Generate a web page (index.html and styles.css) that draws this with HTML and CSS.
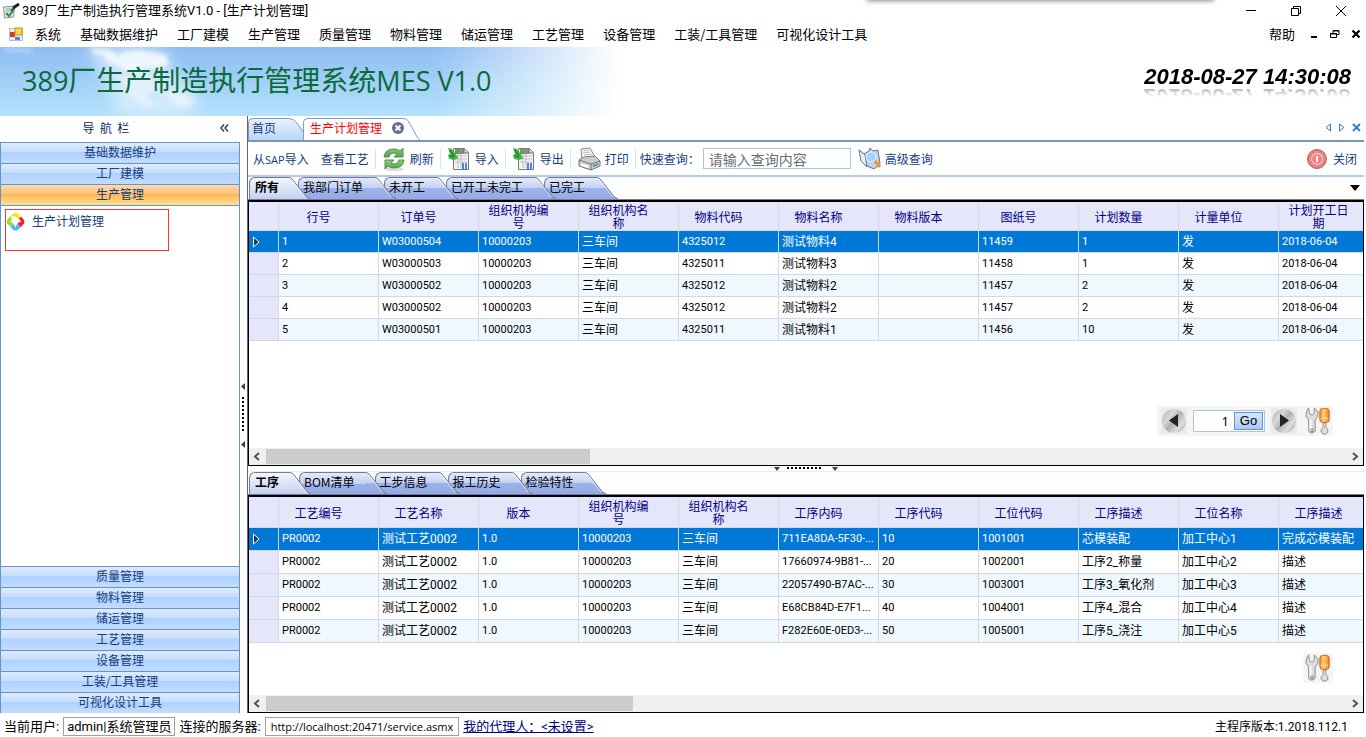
FILE: index.html
```html
<!DOCTYPE html>
<html lang="zh-CN">
<head>
<meta charset="utf-8">
<title>389厂生产制造执行管理系统V1.0</title>
<link rel="stylesheet" href="styles.css">
</head>
<body>
<svg class="defs" width="0" height="0" aria-hidden="true">
  <defs>
    <linearGradient id="gTab" x1="0" y1="0" x2="0" y2="1"><stop offset="0" stop-color="#e3eafa"/><stop offset=".5" stop-color="#c3d0f2"/><stop offset=".5" stop-color="#9bb2ea"/><stop offset="1" stop-color="#94abe6"/></linearGradient>
    <linearGradient id="gTabOn" x1="0" y1="0" x2="0" y2="1"><stop offset="0" stop-color="#f4f6fc"/><stop offset="1" stop-color="#c3d1f1"/></linearGradient>
    <linearGradient id="gHome" x1="0" y1="0" x2="0" y2="1"><stop offset="0" stop-color="#e9f1fc"/><stop offset="1" stop-color="#b9d5f9"/></linearGradient>
    <linearGradient id="gMetal" x1="0" y1=".1" x2="1" y2=".9"><stop offset="0" stop-color="#b4b4b4"/><stop offset=".3" stop-color="#d8d8d8"/><stop offset=".5" stop-color="#b0b0b0"/><stop offset=".75" stop-color="#dedede"/><stop offset="1" stop-color="#a4a4a4"/></linearGradient>
    <linearGradient id="gOrange" x1="0" y1="0" x2="1" y2="0"><stop offset="0" stop-color="#f78c20"/><stop offset=".4" stop-color="#ffd070"/><stop offset="1" stop-color="#f58018"/></linearGradient>
    <linearGradient id="gGreen" x1="0" y1="0" x2="0" y2="1"><stop offset="0" stop-color="#8fd070"/><stop offset="1" stop-color="#4fa648"/></linearGradient>
    <symbol id="slope" viewBox="0 0 21 22"><path d="M0 .5Q2 .5 4 3L17 19.500Q19 21.500 21 22H0z"/><path d="M0 1.500Q1.500 1.500 3 3.500L16 20" fill="none" stroke="#fff" opacity=".7"/><path d="M0 .5Q2 .5 4 3L17 19.500Q19 21.500 21 21.500" fill="none" stroke="#77789a"/></symbol>
    <symbol id="sheet" viewBox="0 0 24 24"><path d="M6.500 1.500h11l4 4v17h-15z" fill="#f4f4f4" stroke="#777"/><path d="M8 2h9v5H8z" fill="#8c8c8c"/><path d="M17 2v4h4" fill="#ddd" stroke="#666"/><path d="M8 9h12M8 12h12M8 15h12M11 7v14M14 7v14" stroke="#b4b4b4" stroke-width=".8"/><path d="M15 16h2v6h-2zM18 16h2v6h-2z" fill="#4d86e0"/><path d="M1 1l4 1 2 4 3-4 2 2-3 4 2 3-4 2-5-1-1-4 2-1z" fill="#3fb43f"/><path d="M3 3l4 6M3 9l4 1" stroke="#0d6d1d"/></symbol>
    <symbol id="tools" viewBox="0 0 30 30"><path d="M3 4l2-3 1 6 3 2 2-3V1l4 4v5l-3 4v12q-4 4-7 0V14L2 10z" fill="#ddd" stroke="#888"/><path d="M7 13v12" stroke="#fff" stroke-width="2"/><circle cx="8.500" cy="25" r="1.500" fill="#fff" stroke="#666"/><path d="M20.500 17h3v5l2 2v3l-2 2h-3l-2-2v-3l2-2z" fill="#ddd" stroke="#888"/><rect x="17" y="1.500" width="10" height="15" rx="3" fill="url(#gOrange)" stroke="#cf5d20"/><path d="M18 12h8" stroke="#ffe8b0"/></symbol>
    <symbol id="knob" viewBox="0 0 26 26"><rect width="26" height="26" fill="#ebebeb"/><circle cx="13" cy="13" r="12" fill="url(#gMetal)"/></symbol>
  </defs>
</svg>

<header class="titlebar">
  <svg class="appicon" viewBox="0 0 18 18"><path d="M1.500 5l11-1-1 11-9 1z" fill="#dfe6ea" stroke="#8a959b"/><path d="M4 7h6M4 9h4" stroke="#9aa"/><path d="M4 11l3 3 5-7" fill="none" stroke="#3b8a35" stroke-width="2"/><path d="M9 9l4-4" stroke="#555" stroke-width="2"/><path d="M11 6l6-4" stroke="#222" stroke-width="3"/></svg>
  <h1>389厂生产制造执行管理系统V1.0 - [生产计划管理]</h1>
  <i class="shadow-strip"></i>
  <div class="winbtns">
    <button aria-label="最小化"><svg width="12" height="12"><path d="M1 5.500h10" stroke="#000"/></svg></button>
    <button aria-label="还原"><svg width="12" height="12"><path d="M1.500 3.500h7v7h-7zM3.500 3V1.500h7v7H9" fill="none" stroke="#000"/></svg></button>
    <button aria-label="关闭窗口"><svg width="12" height="12"><path d="M1 1l10 10M11 1L1 11" stroke="#000"/></svg></button>
  </div>
</header>

<nav class="menubar">
  <svg class="formicon" viewBox="0 0 14 14"><rect x=".5" y="1.500" width="13" height="12" fill="#eee" stroke="#bbb"/><rect x="1" y="5" width="5" height="5" fill="#d33a26"/><rect x="6" y="1" width="7" height="7" fill="#ffd34d" stroke="#c99612"/><rect x="6" y="10" width="5" height="3" fill="#4d86e8"/></svg>
  <button>系统</button><button>基础数据维护</button><button>工厂建模</button><button>生产管理</button><button>质量管理</button><button>物料管理</button><button>储运管理</button><button>工艺管理</button><button>设备管理</button><button>工装/工具管理</button><button>可视化设计工具</button>
  <button class="help">帮助</button>
  <div class="mdibtns">
    <button aria-label="最小化子窗口"><svg width="10" height="10"><path d="M2 8h6" stroke="#000" stroke-width="2"/></svg></button>
    <button aria-label="还原子窗口"><svg width="10" height="10"><path d="M.5 4.500h6v4h-6zM3 4V1.500h6v4H7M3 2h6M0 5h7" fill="none" stroke="#000"/></svg></button>
    <button aria-label="关闭子窗口"><svg width="10" height="10"><path d="M1.500 1.500l7 7M8.500 1.500l-7 7" stroke="#000" stroke-width="2.200"/></svg></button>
  </div>
</nav>

<section class="banner">
  <svg class="sky" viewBox="0 0 620 69" width="620" height="69" aria-hidden="true">
    <defs>
      <linearGradient id="sky" x1="0" y1="0" x2="0" y2="1"><stop offset="0" stop-color="#8fbdf2"/><stop offset="1" stop-color="#b4e2fc"/></linearGradient>
      <linearGradient id="fade" x1="0" x2="1" y1="0" y2="0"><stop offset=".7" stop-color="#fff" stop-opacity="0"/><stop offset="1" stop-color="#fff"/></linearGradient>
      <filter id="soft" x="-20%" y="-40%" width="140%" height="180%"><feGaussianBlur stdDeviation="2"/></filter>
      <filter id="softer" x="-20%" y="-40%" width="140%" height="180%"><feGaussianBlur stdDeviation="7"/></filter>
    </defs>
    <rect width="620" height="69" fill="url(#sky)"/>
    <path d="M86 0h70l14 8 0 14 16 14 14 20-10 13H120l-18-40z" fill="#e5f3fd" opacity=".65" filter="url(#softer)"/>
    <g fill="#fff" filter="url(#soft)" opacity=".7"><path d="M90 1l20 2 8 6 8-5 14-1 14 3 12 2 3 8-8 6-14-2-8 7-14-3-8-6-9-3-4-6-12-3z"/><path d="M118 27l16 4 10-5 10 6 6 8-8 3-6 8 10 8-10 1-16-10-8-14z" opacity=".55"/><path d="M0 2h32v3H8zM166 46l14-2 16 10-10 7-14-4z" opacity=".6"/></g>
    <rect width="620" height="69" fill="url(#fade)"/>
  </svg>
  <div class="brand"><b>389</b>厂生产制造执行管理系统<b>MES V1.0</b></div>
  <time class="clock" datetime="2018-08-27T14:30:08">2018-08-27 14:30:08</time>
</section>

<main class="work">
  <aside class="side">
    <div class="side-head"><span>导&nbsp;&nbsp;航&nbsp;&nbsp;栏</span><button aria-label="折叠"><svg width="9" height="8"><path d="M4 .5L1 4l3 3.500M8 .5L5 4l3 3.500" fill="none" stroke="#153d7e" stroke-width="1.400"/></svg></button></div>
    <div class="groups">
      <button>基础数据维护</button><button>工厂建模</button><button class="on">生产管理</button>
      <div class="group-body"><a class="entry" href="#plan"><svg viewBox="0 0 18 18"><path d="M3.500 4.500L7 1.500Q9 0 11 1.500L14.500 4.500 9 9z" fill="#ffe11e"/><path d="M14.500 4.500L17 7.500Q18 9 17 11L14 14.500 9 9z" fill="#ee1f2b"/><path d="M14 14.500L11 17Q9 18 7 17L4 14 9 9z" fill="#55b5f5"/><path d="M4 14L1 11Q0 9 1 7.500L3.500 4.500 9 9z" fill="#9be02a"/><path d="M4.500 3.500Q11 4 14.500 9 10 10 9 15 7 10 4 9q3-2 .5-5.500z" fill="#fff"/></svg>生产计划管理</a></div>
      <button>质量管理</button><button>物料管理</button><button>储运管理</button><button>工艺管理</button><button>设备管理</button><button>工装/工具管理</button><button>可视化设计工具</button>
    </div>
  </aside>
  <div class="vsplit"><svg width="6" height="66"><path d="M5 1v7L1 4.500zM5 59v7l-4-3.500z" fill="#27406e"/><path d="M3 15v36" stroke="#000" stroke-width="2" stroke-dasharray="2 2"/></svg></div>

  <section class="doc">
    <div class="doctabs">
      <button class="doctab home"><span>首页</span><svg width="15" height="22"><path d="M0 .5Q5 .5 8 5L15 15v8H0z" fill="url(#gHome)"/><path d="M0 .5Q5 .5 8 5L15 15" fill="none" stroke="#7f9cc8"/></svg></button>
      <button class="doctab open"><span>生产计划管理</span><em><svg width="12" height="12"><circle cx="6" cy="6" r="6" fill="#5c6e93"/><path d="M3.500 3.500l5 5M8.500 3.500l-5 5" stroke="#fff" stroke-width="2"/></svg></em><svg width="16" height="22"><path d="M0 .5Q3 .5 5 4L12 17q2 4 4 5H0z" fill="#fff"/><path d="M0 .5Q3 .5 5 4L12 17q2 4 4 5" fill="none" stroke="#7f9cc8"/></svg></button>
      <div class="docnav"><button aria-label="向左"><svg width="8" height="9"><path d="M6.500 1v7L2 4.500z" fill="none" stroke="#2f78d8"/></svg></button><button aria-label="向右"><svg width="8" height="9"><path d="M1.500 1v7L6 4.500z" fill="none" stroke="#2f78d8"/></svg></button><button aria-label="关闭页"><svg width="9" height="9"><path d="M1 1l7 7M8 1L1 8" stroke="#3277d6" stroke-width="1.800"/></svg></button></div>
    </div>
    <div class="toolbar">
      <button><span>从<small>SAP</small>导入</span></button><button>查看工艺</button><i></i>
      <button><svg viewBox="0 0 24 24"><ellipse cx="12" cy="22" rx="10" ry="2" fill="#ddd"/><path d="M2 10Q3 2 12 2q4 0 6 2l3-3v9h-9l3-3Q9 4 7 10z" fill="url(#gGreen)" stroke="#5b8a50"/><path d="M22 13q-1 8-10 8-4 0-6-2l-3 3v-9h9l-3 3q6 3 8-3z" fill="url(#gGreen)" stroke="#5b8a50"/></svg>刷新</button><i></i>
      <button><svg><use href="#sheet"/></svg>导入</button><i></i>
      <button><svg><use href="#sheet"/></svg>导出</button><i></i>
      <button><svg viewBox="0 0 24 24"><path d="M5 13L4 2l9-1 5 9z" fill="#fafafa" stroke="#888"/><path d="M6 4l6-1M6 6l7-1M7 8l8-1" stroke="#bbb"/><path d="M2 13l5-3 11-1 5 5v5l-9 4-12-4z" fill="#ccc" stroke="#777"/><path d="M2 13l12 4 9-3M14 17v6" fill="none" stroke="#777"/><path d="M4 16l8 3v2l-8-2z" fill="#fff"/><path d="M16 19l5-2" stroke="#3da4c4" stroke-width="2"/></svg>打印</button><i></i>
      <label for="q">快速查询：</label><input id="q" type="text" placeholder="请输入查询内容">
      <button class="adv"><svg viewBox="0 0 24 24"><path d="M1 3l5 4 5-3 1-3 3 3 5-1 2 14-6 5-7-3z" fill="#bcd2ee" stroke="#66789a"/><path d="M1 3l2 11 6 6L7 8z" fill="#e8eef8" stroke="#66789a"/><circle cx="13" cy="10" r="5" fill="#a5d0ff" stroke="#e8f3ff"/><path d="M17 14l5 6" stroke="#ee9c2c" stroke-width="3.500"/></svg>高级查询</button>
      <button class="close"><svg viewBox="0 0 24 24"><circle cx="12" cy="12" r="9.500" fill="#ef7f80" stroke="#9d6a6a"/><circle cx="12" cy="12" r="5.500" fill="none" stroke="#ffc8c8" stroke-width="1.300"/><path d="M12 9v6" stroke="#fff" stroke-width="2"/></svg>关闭</button>
    </div>

    <div class="pane top">
      <div class="tabs">
        <button class="on"><span>所有</span><svg><use href="#slope"/></svg></button><button><span>我部门订单</span><svg><use href="#slope"/></svg></button><button><span>未开工</span><svg><use href="#slope"/></svg></button><button><span>已开工未完工</span><svg><use href="#slope"/></svg></button><button><span>已完工</span><svg><use href="#slope"/></svg></button>
        <svg class="more" width="10" height="6"><path d="M0 0h10L5 6z"/></svg>
      </div>
      <div class="frame">
        <table class="orders">
          <thead><tr><th class="rh"></th><th>行号</th><th>订单号</th><th>组织机构编号</th><th>组织机构名称</th><th>物料代码</th><th>物料名称</th><th>物料版本</th><th>图纸号</th><th>计划数量</th><th>计量单位</th><th>计划开工日期</th></tr></thead>
          <tbody>
            <tr class="sel"><td class="rh"><svg width="8" height="12"><path d="M1.500 1v10L7 6z" fill="#333" stroke="#fff"/></svg></td><td>1</td><td>W03000504</td><td>10000203</td><td class="cn">三车间</td><td>4325012</td><td class="cn">测试物料4</td><td></td><td>11459</td><td>1</td><td class="cn">发</td><td>2018-06-04</td></tr>
            <tr><td class="rh"></td><td>2</td><td>W03000503</td><td>10000203</td><td class="cn">三车间</td><td>4325011</td><td class="cn">测试物料3</td><td></td><td>11458</td><td>1</td><td class="cn">发</td><td>2018-06-04</td></tr>
            <tr><td class="rh"></td><td>3</td><td>W03000502</td><td>10000203</td><td class="cn">三车间</td><td>4325012</td><td class="cn">测试物料2</td><td></td><td>11457</td><td>2</td><td class="cn">发</td><td>2018-06-04</td></tr>
            <tr><td class="rh"></td><td>4</td><td>W03000502</td><td>10000203</td><td class="cn">三车间</td><td>4325012</td><td class="cn">测试物料2</td><td></td><td>11457</td><td>2</td><td class="cn">发</td><td>2018-06-04</td></tr>
            <tr><td class="rh"></td><td>5</td><td>W03000501</td><td>10000203</td><td class="cn">三车间</td><td>4325011</td><td class="cn">测试物料1</td><td></td><td>11456</td><td>10</td><td class="cn">发</td><td>2018-06-04</td></tr>
          </tbody>
        </table>
        <div class="pager">
          <button aria-label="上一页"><svg viewBox="0 0 26 26"><use href="#knob"/><path d="M17 6v13L8 12.500z" fill="#222"/></svg></button>
          <div class="goto"><input type="text" value="1" aria-label="页码"><button>Go</button></div>
          <button aria-label="下一页"><svg viewBox="0 0 26 26"><use href="#knob"/><path d="M9 6v13l9-6.500z" fill="#222"/></svg></button>
          <button class="cfg" aria-label="设置"><svg><use href="#tools"/></svg></button>
        </div>
        <div class="hscroll"><svg width="7" height="9"><path d="M6 1L2 4.500 6 8" fill="none" stroke="#505050" stroke-width="2"/></svg><div class="track"><i class="thumb-a"></i></div><svg width="7" height="9"><path d="M1 1l4 3.500L1 8" fill="none" stroke="#505050" stroke-width="2"/></svg></div>
      </div>
    </div>

    <div class="hsplit"><svg width="66" height="5"><path d="M1 1h6L4 5zM59 1h6l-3 4z" fill="#27406e"/><path d="M14 2h36" stroke="#000" stroke-width="2" stroke-dasharray="2 2"/></svg></div>

    <div class="pane bottom">
      <div class="tabs">
        <button class="on"><span>工序</span><svg><use href="#slope"/></svg></button><button><span>BOM清单</span><svg><use href="#slope"/></svg></button><button><span>工步信息</span><svg><use href="#slope"/></svg></button><button><span>报工历史</span><svg><use href="#slope"/></svg></button><button><span>检验特性</span><svg><use href="#slope"/></svg></button>
      </div>
      <div class="frame">
        <table class="steps">
          <thead><tr><th class="rh"></th><th>工艺编号</th><th>工艺名称</th><th>版本</th><th>组织机构编号</th><th>组织机构名称</th><th>工序内码</th><th>工序代码</th><th>工位代码</th><th>工序描述</th><th>工位名称</th><th>工序描述</th></tr></thead>
          <tbody>
            <tr class="sel"><td class="rh"><svg width="8" height="12"><path d="M1.500 1v10L7 6z" fill="#333" stroke="#fff"/></svg></td><td>PR0002</td><td class="cn">测试工艺0002</td><td>1.0</td><td>10000203</td><td class="cn">三车间</td><td>711EA8DA-5F30-...</td><td>10</td><td>1001001</td><td class="cn">芯模装配</td><td class="cn">加工中心1</td><td class="cn">完成芯模装配</td></tr>
            <tr><td class="rh"></td><td>PR0002</td><td class="cn">测试工艺0002</td><td>1.0</td><td>10000203</td><td class="cn">三车间</td><td>17660974-9B81-...</td><td>20</td><td>1002001</td><td class="cn">工序2_称量</td><td class="cn">加工中心2</td><td class="cn">描述</td></tr>
            <tr><td class="rh"></td><td>PR0002</td><td class="cn">测试工艺0002</td><td>1.0</td><td>10000203</td><td class="cn">三车间</td><td>22057490-B7AC-...</td><td>30</td><td>1003001</td><td class="cn">工序3_氧化剂</td><td class="cn">加工中心3</td><td class="cn">描述</td></tr>
            <tr><td class="rh"></td><td>PR0002</td><td class="cn">测试工艺0002</td><td>1.0</td><td>10000203</td><td class="cn">三车间</td><td>E68CB84D-E7F1...</td><td>40</td><td>1004001</td><td class="cn">工序4_混合</td><td class="cn">加工中心4</td><td class="cn">描述</td></tr>
            <tr><td class="rh"></td><td>PR0002</td><td class="cn">测试工艺0002</td><td>1.0</td><td>10000203</td><td class="cn">三车间</td><td>F282E60E-0ED3-...</td><td>50</td><td>1005001</td><td class="cn">工序5_浇注</td><td class="cn">加工中心5</td><td class="cn">描述</td></tr>
          </tbody>
        </table>
        <div class="pager"><button class="cfg" aria-label="设置"><svg><use href="#tools"/></svg></button></div>
        <div class="hscroll"><svg width="7" height="9"><path d="M6 1L2 4.500 6 8" fill="none" stroke="#505050" stroke-width="2"/></svg><div class="track"><i class="thumb-b"></i></div><svg width="7" height="9"><path d="M1 1l4 3.500L1 8" fill="none" stroke="#505050" stroke-width="2"/></svg></div>
      </div>
    </div>
  </section>
</main>

<footer class="status">
  <span>当前用户:</span><span class="box">admin|系统管理员</span><span>连接的服务器:</span><span class="box url">http://localhost:20471/service.asmx</span><a href="#agent">我的代理人：&lt;未设置&gt;</a>
  <span class="ver">主程序版本:1.2018.112.1</span>
</footer>
</body>
</html>
```
FILE: styles.css
```css
* { box-sizing: border-box; }
body {
  margin: 0;
  height: 100vh;
  display: flex;
  flex-direction: column;
  background: #fff;
  color: #000;
  font: 12px/16px "Noto Sans CJK SC", sans-serif;
  overflow: hidden;
}
button { background: none; border: 0; padding: 0; margin: 0; font: inherit; color: inherit; white-space: nowrap; }
button svg { display: block; }
i, em { font-style: normal; }
.defs { position: absolute; }

/* window chrome */
.titlebar { display: flex; align-items: center; height: 22px; flex: none; position: relative; }
.appicon { width: 18px; height: 18px; margin: 0 2px; }
.titlebar h1 { margin: 0; font: 13px/20px Roboto, "Noto Sans CJK SC", sans-serif; }
.shadow-strip { position: absolute; top: -10px; left: 868px; right: 153px; height: 10px; box-shadow: 0 0 5px 1px #888; }
.winbtns { margin-left: auto; display: flex; gap: 33px; padding-right: 19px; }
.menubar { display: flex; align-items: center; height: 25px; flex: none; gap: 19px; font-size: 13px; padding: 0 0 2px 9px; }
.formicon { width: 14px; height: 14px; margin-right: -7px; }
.help { margin-left: auto; }
.mdibtns { display: flex; gap: 11px; padding-right: 5px; margin-left: -5px; }

.banner { position: relative; height: 69px; flex: none; display: flex; align-items: center; justify-content: space-between; }
.sky { position: absolute; left: 0; top: 0; z-index: -1; }
.brand { padding: 0 0 4px 22px; color: #0a6a3a; font-size: 28px; line-height: 40px; white-space: nowrap; }
.brand b { font: 27px/40px "Open Sans", sans-serif; }
.clock { font: italic bold 22px/22px "Liberation Sans", Arial, sans-serif; margin: 0 15px 10px 0; -webkit-box-reflect: below -3px linear-gradient(transparent 45%, rgba(0, 0, 0, .4)); }

/* navigation */
.work { flex: 1; display: flex; min-height: 0; color: #153d7e; }
.side { width: 240px; flex: none; display: flex; flex-direction: column; }
.side-head { height: 26px; display: flex; align-items: center; padding: 0 11px 2px 0; color: #0c2a66; }
.side-head span { flex: 1; text-align: center; padding-right: 8px; }
.groups { flex: 1; display: flex; flex-direction: column; border: 1px solid #6593cf; border-width: 0 1px; }
.groups > button { height: 21px; line-height: 18px; padding-bottom: 2px; border-top: 1px solid #6593cf; background: linear-gradient(#dfebfd, #c5dcfc 45%, #add1ff 45%, #c2dcff); }
.groups > .on { background: linear-gradient(#ffd9aa, #ffc178 45%, #feb553 45%, #ffe28f); border-bottom: 1px solid #6593cf; height: 22px; }
.group-body { flex: 1; padding: 3px 4px; }
.entry { display: flex; gap: 7px; width: 164px; height: 42px; border: 1px solid #f33; padding: 2px 0; color: inherit; text-decoration: none; line-height: 17px; }
.entry svg { width: 19px; height: 19px; }
.vsplit { width: 7px; flex: none; display: flex; align-items: center; }

/* document tabs */
.doc { flex: 1; min-width: 0; display: flex; flex-direction: column; border-left: 1px solid #666; margin-right: 2px; }
.doctabs { display: flex; height: 26px; flex: none; align-items: flex-end; border-bottom: 2px solid #7e93b8; }
.doctab { display: flex; align-items: flex-start; height: 22px; }
.doctab span, .doctab em { height: 22px; border-top: 1px solid #7f9cc8; line-height: 17px; }
.doctab span { border-left: 1px solid #7f9cc8; border-top-left-radius: 5px; padding-left: 3px; }
.home span { background: linear-gradient(#e9f1fc, #b9d5f9); padding-right: 13px; }
.open { color: #f00; margin-left: -1px; position: relative; }
.open span { background: #fff; padding: 0 10px 0 6px; }
.doctab em { padding-top: 3px; background: #fff; }
.docnav { margin-left: auto; display: flex; gap: 6px; align-self: center; padding: 0 3px 1px 0; }

.toolbar { display: flex; align-items: center; height: 35px; flex: none; border-bottom: 2px solid #b3cbe9; padding: 0 7px 0 5px; }
.toolbar button { display: flex; align-items: center; gap: 4px; }
.toolbar button + button { margin-left: 12px; }
.toolbar small { font: 11px "Open Sans", sans-serif; }
.toolbar svg { width: 24px; height: 24px; }
.toolbar i { width: 1px; height: 20px; background: #d5e2f2; margin: 0 6px 0 6px; }
.toolbar label { margin: 0 3px 0 -2px; }
.toolbar input { width: 148px; height: 21px; border: 1px solid #a9c5e8; padding: 0 5px; font: 14px/18px "Noto Sans CJK SC", sans-serif; margin-right: 7px; }
.toolbar input::placeholder { color: #6d6d6d; }
.toolbar .adv { gap: 3px; }
.toolbar .close { margin-left: auto; }

/* panes */
.pane { display: flex; flex-direction: column; min-height: 0; }
.top { flex: 289 1 0; }
.bottom { flex: 241 1 0; }
.tabs { display: flex; height: 23px; flex: none; border-bottom: 1px solid #77789a; padding-left: 1px; position: relative; z-index: 0; color: #000; }
.tabs button { display: flex; position: relative; margin-right: -12px; fill: url(#gTab); }
.tabs span { border: 1px solid #77789a; border-width: 1px 0 0 1px; border-top-left-radius: 6px; padding: 0 12px 0 4px; line-height: 17px; background: linear-gradient(#e3eafa, #c3d0f2 50%, #9bb2ea 50%, #94abe6); height: 22px; }
.tabs button svg { width: 21px; height: 22px; }
.tabs .on { fill: url(#gTabOn); font-weight: bold; }
.tabs .on span { background: linear-gradient(#f4f6fc, #c3d1f1); padding: 0 10px 0 5px; }
.bottom .tabs span { padding-right: 11px; }
.tabs button:nth-child(1) { z-index: 5; }
.tabs button:nth-child(2) { z-index: 4; }
.tabs button:nth-child(3) { z-index: 3; }
.tabs button:nth-child(4) { z-index: 2; }
.tabs button:nth-child(5) { z-index: 1; }
.more { margin: 8px 4px 0 auto; }
.frame { flex: 1; min-height: 0; display: flex; flex-direction: column; border: 1px solid #000; border-top-width: 2px; overflow: hidden; color: #000; }
table { table-layout: fixed; width: 1130px; flex: none; border-collapse: separate; border-spacing: 0; }
th, td { border-right: 1px solid #d0d7e5; border-bottom: 1px solid #d0d7e5; overflow: hidden; white-space: nowrap; }
th { width: 100px; height: 29px; background: #e6e6fa; color: #000080; font-weight: normal; line-height: 13px; padding: 0 28px 0 8px; white-space: normal; }
td { padding: 0 3px; height: 22px; font: 11px/16px Roboto, "Liberation Sans", sans-serif; }
td.cn { font: 12px/16px Roboto, "Noto Sans CJK SC", sans-serif; }
td svg { display: block; }
.steps th { height: 31px; }
.steps td { height: 23px; }
tbody tr { background: #fff; }
tbody tr:nth-child(odd) { background: #f0f8ff; }
tbody tr.sel { background: #0078d7; color: #fff; }
.rh { width: 30px; padding: 0 3px; background: #e6e6fa; }
.sel .rh { background: #0078d7; }

.pager { margin: auto 30px 12px auto; display: flex; align-items: center; gap: 6px; background: #f5f5f5; height: 30px; padding-left: 4px; }
.pager > button svg { width: 26px; height: 26px; }
.pager .cfg { padding: 0 1px; }
.pager .cfg svg { width: 28px; height: 28px; }
.bottom .pager { padding-left: 0; }
.goto { display: flex; align-items: center; width: 72px; height: 22px; border: 1px solid #a9c5e8; background: #fff; padding-right: 1px; }
.goto input { flex: 1; min-width: 0; border: 0; padding: 0 5px 0 0; text-align: right; font: 13px/18px "Noto Sans", sans-serif; background: none; }
.goto button { width: 29px; height: 18px; border: 1px solid #6593cf; background: linear-gradient(#d6e6fb, #a9cbf5); font: 13px/14px "Liberation Sans", sans-serif; }
.hscroll { height: 17px; flex: none; display: flex; align-items: center; justify-content: space-between; background: #f0f0f0; padding: 0 4px; gap: 6px; }
.hscroll > svg { flex: none; }
.track { flex: 1; height: 15px; }
.track i { display: block; height: 15px; background: #cdcdcd; }
.thumb-a { width: 30%; }
.thumb-b { width: 34%; }
.hsplit { height: 6px; flex: none; display: flex; justify-content: center; border-bottom: 1px solid #e3eefb; }

.status { height: 24px; flex: none; display: flex; align-items: center; padding: 3px 18px 0 4px; gap: 4px; font: 13px/16px Roboto, "Noto Sans CJK SC", sans-serif; }
.box { border: 1px solid #a0a0a0; padding: 0 3px; height: 19px; line-height: 17px; }
.url { font: 11px/17px "Open Sans", sans-serif; padding: 0 5px; }
.status a { color: #000080; }
.ver { margin-left: auto; font-size: 12px; }
```
